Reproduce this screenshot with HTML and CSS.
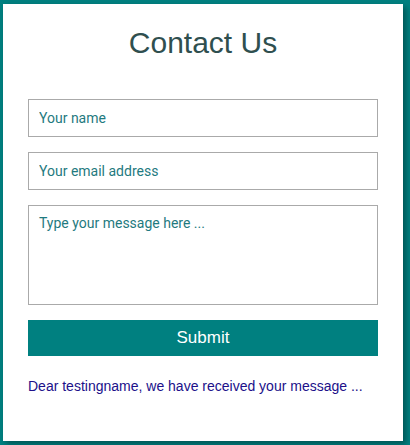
FILE: index.html
```html
<!DOCTYPE html>
<html>
<head>
<meta charset="utf-8">
<link rel="stylesheet" href="styles.css">
</head>
<body>
<div class="card">
  <h1 class="title">Contact Us</h1>
  <form class="form">
    <input class="field" type="text" placeholder="Your name">
    <input class="field" type="email" placeholder="Your email address">
    <textarea class="field area" placeholder="Type your message here ..."></textarea>
    <button class="submit" type="button">Submit</button>
  </form>
  <p class="notice">Dear testingname, we have received your message ...</p>
</div>
</body>
</html>
```

FILE: styles.css
```css
html, body {
  height: 100%;
}
body {
  margin: 0;
  padding: 4px 0 0 3px;
  box-sizing: border-box;
  background: #008080;
  font-family: "Liberation Sans", Arial, sans-serif;
}
.card {
  width: 400px;
  height: 437px;
  box-sizing: border-box;
  background: #fff;
  padding: 22px 25px 0;
  box-shadow: 3px 3px 6px rgba(0, 0, 0, 0.35);
}
.title {
  margin: 0;
  font-size: 30px;
  font-weight: normal;
  line-height: 34px;
  text-align: center;
  color: #2f4f4f;
}
.form {
  margin-top: 39px;
  display: flex;
  flex-direction: column;
}
.field {
  display: block;
  width: 350px;
  height: 38px;
  box-sizing: border-box;
  border: 1px solid #aaaaaa;
  padding: 0 10px;
  margin: 0 0 15px;
  font-family: Roboto, "Noto Sans", sans-serif;
  font-size: 14px;
  color: #1e6e72;
  outline: none;
  border-radius: 0;
}
.field::placeholder {
  color: #1f7a80;
  opacity: 1;
}
.area {
  height: 100px;
  padding-top: 9px;
  resize: none;
  margin-bottom: 15px;
}
.submit {
  width: 350px;
  height: 36px;
  border: none;
  background: #008080;
  color: #fff;
  font-family: "Liberation Sans", Arial, sans-serif;
  font-size: 17px;
  padding: 0;
  border-radius: 0;
}
.notice {
  margin: 22px 0 0;
  font-size: 14px;
  line-height: 17px;
  white-space: nowrap;
  color: #20108a;
}
```
